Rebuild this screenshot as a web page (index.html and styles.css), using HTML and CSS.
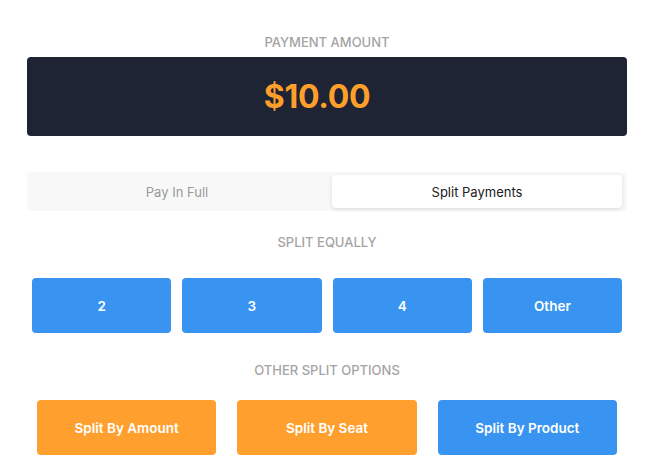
FILE: index.html
```html
<!DOCTYPE html>
<html>
<head>
<meta charset="utf-8">
<link rel="stylesheet" href="styles.css">
</head>
<body>
<div class="panel">
  <div class="label first">PAYMENT AMOUNT</div>
  <div class="amount-box"><span class="amount">$10.00</span></div>
  <div class="tabs">
    <div class="tab">Pay In Full</div>
    <div class="tab active">Split Payments</div>
  </div>
  <div class="label">SPLIT EQUALLY</div>
  <div class="row four">
    <div class="btn blue">2</div>
    <div class="btn blue">3</div>
    <div class="btn blue">4</div>
    <div class="btn blue">Other</div>
  </div>
  <div class="label">OTHER SPLIT OPTIONS</div>
  <div class="row three">
    <div class="btn orange">Split By Amount</div>
    <div class="btn orange">Split By Seat</div>
    <div class="btn blue">Split By Product</div>
  </div>
</div>
</body>
</html>
```
FILE: styles.css
```css
html, body { margin: 0; padding: 0; background: #fff; }
body { font-family: Inter, "Noto Sans", sans-serif; }
.panel { width: 600px; margin-left: 27px; padding-top: 34px; }
.label { text-align: center; font-size: 13px; font-weight: 500; color: #a4a4a4; line-height: 16px; height: 16px; }
.amount-box { margin-top: 7px; height: 79px; background: #1e2433; border-radius: 4px; display: flex; align-items: center; justify-content: center; padding-right: 20px; box-sizing: border-box; }
.amount { color: #ff9f2b; font-size: 32px; font-weight: 700; letter-spacing: -0.3px; }
.tabs { margin-top: 36px; height: 39px; background: #f8f8f8; border-radius: 4px; padding: 3px 5px; box-sizing: border-box; display: flex; gap: 10px; }
.tab { flex: 1; display: flex; align-items: center; justify-content: center; font-size: 13px; color: #9a9a9a; border-radius: 4px; }
.tab.active { background: #fff; color: #222; box-shadow: 0 1px 4px rgba(0,0,0,0.12); }
.tabs + .label { margin-top: 23px; }
.row { display: flex; }
.row.four { margin-top: 28px; padding: 0 5px; gap: 11px; }
.row.three { margin-top: 22px; padding: 0 10px; gap: 21px; }
.row.four + .label { margin-top: 29px; }
.btn { flex: 1; height: 55px; border-radius: 4px; display: flex; align-items: center; justify-content: center; color: #fff; font-size: 13.5px; font-weight: 600; }
.blue { background: #3894f0; }
.orange { background: #ffa02e; }
```
